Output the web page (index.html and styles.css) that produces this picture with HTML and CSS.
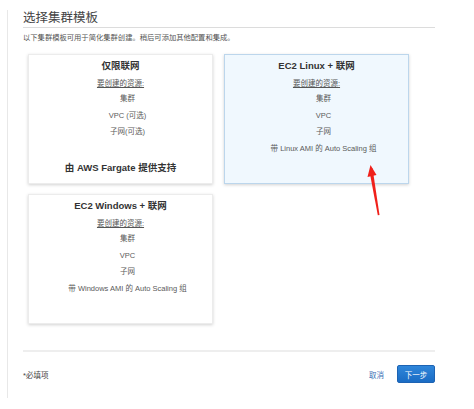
FILE: index.html
```html
<!DOCTYPE html>
<html>
<head>
<meta charset="utf-8">
<link rel="stylesheet" href="styles.css">
</head>
<body>
<div class="frame">
  <div class="page">
    <h1 class="title">选择集群模板</h1>
    <p class="subtitle">以下集群模板可用于简化集群创建。稍后可添加其他配置和集成。</p>
    <div class="grid">
      <div class="card">
        <div class="card-title">仅限联网</div>
        <div class="res">要创建的资源:</div>
        <ul class="items">
          <li>集群</li>
          <li>VPC (可选)</li>
          <li>子网(可选)</li>
        </ul>
        <div class="powered">由 AWS Fargate 提供支持</div>
      </div>
      <div class="card selected">
        <div class="card-title">EC2 Linux + 联网</div>
        <div class="res">要创建的资源:</div>
        <ul class="items">
          <li>集群</li>
          <li>VPC</li>
          <li>子网</li>
          <li>带 Linux AMI 的 Auto Scaling 组</li>
        </ul>
      </div>
      <div class="card">
        <div class="card-title">EC2 Windows + 联网</div>
        <div class="res">要创建的资源:</div>
        <ul class="items">
          <li>集群</li>
          <li>VPC</li>
          <li>子网</li>
          <li>带 Windows AMI 的 Auto Scaling 组</li>
        </ul>
      </div>
    </div>
    <div class="footer">
      <span class="required">*必填项</span>
      <div class="actions">
        <a class="cancel">取消</a>
        <button class="next">下一步</button>
      </div>
    </div>
  </div>
  <svg class="arrow" width="30" height="60" viewBox="0 0 30 60">
    <path d="M14.5 6 L21.5 53 L19.8 53.3 L11.5 9.5 Z" fill="#f0201a"/>
    <path d="M9.5 15 L12.5 3 L18.5 13 Z" fill="#f0201a"/>
  </svg>
</div>
</body>
</html>
```

FILE: styles.css
```css
* { box-sizing: border-box; }
body {
  margin: 0;
  background: #fff;
  font-family: "Liberation Sans", Arial, "Noto Sans CJK SC", sans-serif;
  color: #444;
}
.frame {
  position: relative;
  width: 474px;
  height: 409px;
  padding: 10px 0 11px 7px;
}
.page {
  border-left: 1px solid #e8e8e8;
  height: 100%;
  padding: 0 39px 0 15px;
}
.title {
  margin: 0;
  font-size: 12.5px;
  font-weight: normal;
  color: #444;
  line-height: 16px;
  padding-bottom: 1px;
  border-bottom: 1px solid #dcdcdc;
}
.subtitle {
  margin: 5px 0 0;
  font-size: 7.3px;
  line-height: 10px;
  color: #555;
}
.grid {
  display: grid;
  grid-template-columns: 185px 185px;
  column-gap: 11px;
  row-gap: 10px;
  margin: 11px 0 0 5px;
}
.card {
  height: 130px;
  background: #fff;
  border: 1px solid #ececec;
  box-shadow: 0 1px 3px rgba(0,0,0,0.18);
  text-align: center;
  padding-top: 5px;
  position: relative;
}
.card.selected {
  background: #f0f8fe;
  border: 1px solid #bcd6ec;
}
.card-title {
  font-size: 9.5px;
  font-weight: bold;
  color: #333;
  line-height: 12px;
}
.res {
  display: inline-block;
  font-size: 7.5px;
  line-height: 10px;
  color: #555;
  text-decoration: underline;
  margin-top: 6px;
}
.items {
  list-style: none;
  margin: 4px 0 0;
  padding: 0 0 0 14px;
  font-size: 7.5px;
  color: #5a5a5a;
}
.items li {
  line-height: 10px;
  margin-bottom: 6.6px;
}
.powered {
  position: absolute;
  left: 0;
  right: 0;
  bottom: 9px;
  font-size: 9.5px;
  line-height: 12px;
  font-weight: bold;
  color: #333;
}
.footer {
  margin-top: 26px;
  border-top: 2px solid #eeeeee;
  display: flex;
  justify-content: space-between;
  align-items: center;
  padding-top: 13px;
}
.required {
  font-size: 7.5px;
  color: #444;
}
.actions {
  display: flex;
  align-items: center;
  gap: 13px;
}
.cancel {
  font-size: 7.5px;
  color: #3a6db3;
}
.next {
  width: 38px;
  height: 18px;
  border: 1px solid #1d63b3;
  border-radius: 2px;
  background: linear-gradient(#2f86da, #1a6cc4);
  color: #fff;
  font-size: 7.5px;
  padding: 0;
  font-family: inherit;
}
.arrow {
  position: absolute;
  left: 358px;
  top: 162px;
}
```
